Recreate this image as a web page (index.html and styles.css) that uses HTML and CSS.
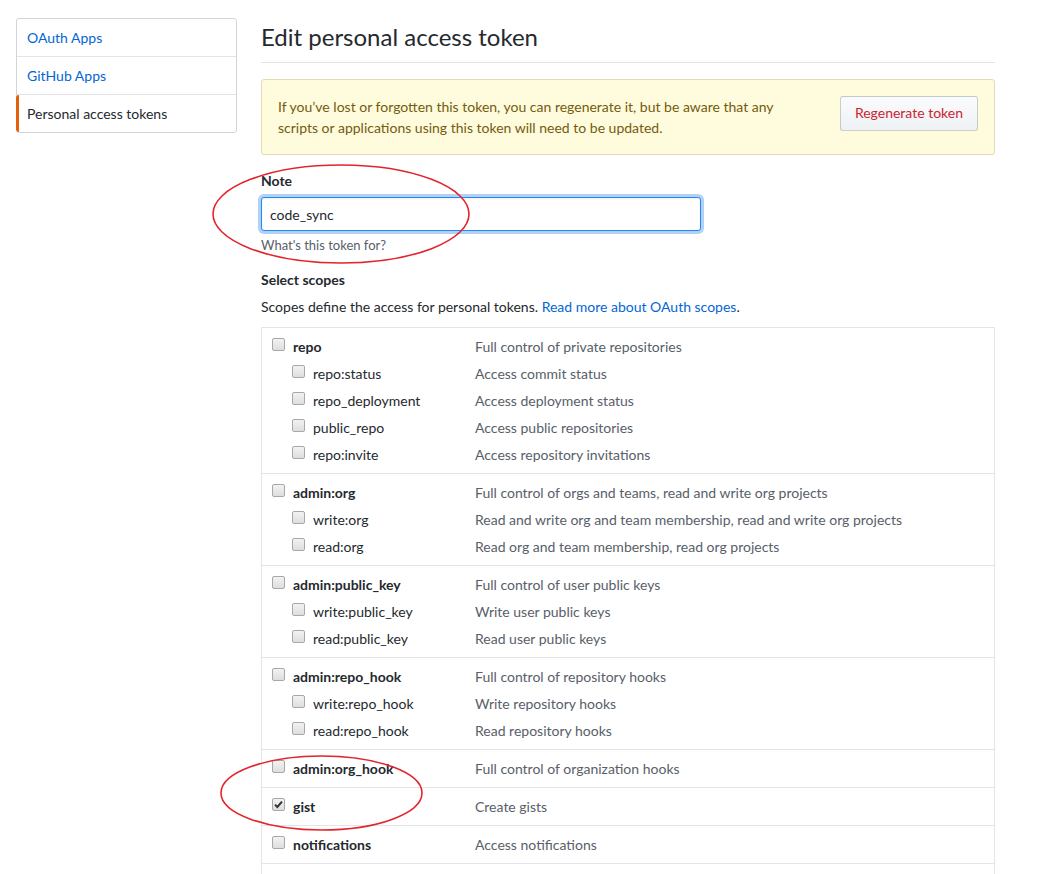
FILE: index.html
```html
<!DOCTYPE html>
<html lang="en">
<head>
<meta charset="utf-8">
<title>Edit personal access token</title>
<link rel="stylesheet" href="styles.css">
</head>
<body>
<div class="page">
  <nav class="menu">
    <a class="menu-item" href="#">OAuth Apps</a>
    <a class="menu-item" href="#">GitHub Apps</a>
    <a class="menu-item selected" href="#">Personal access tokens</a>
  </nav>
  <main class="main">
    <h2 class="subhead">Edit personal access token</h2>
    <div class="flash">
      <p class="flash-text">If you’ve lost or forgotten this token, you can regenerate it, but be aware that any scripts or applications using this token will need to be updated.</p>
      <button class="btn btn-danger" type="button">Regenerate token</button>
    </div>
    <div class="form-group">
      <label class="form-label" for="note">Note</label>
      <input class="form-control" id="note" type="text" value="code_sync">
      <p class="note">What's this token for?</p>
    </div>
    <div class="form-group scopes-head">
      <div class="form-label">Select scopes</div>
      <p class="scopes-intro">Scopes define the access for personal tokens. <a href="#">Read more about OAuth scopes</a>.</p>
    </div>
    <div class="scopes">
      <div class="group">
        <div class="row"><span class="opt"><span class="cb"></span><span class="name">repo</span></span><span class="desc">Full control of private repositories</span></div>
        <div class="row sub"><span class="opt"><span class="cb"></span><span class="name">repo:status</span></span><span class="desc">Access commit status</span></div>
        <div class="row sub"><span class="opt"><span class="cb"></span><span class="name">repo_deployment</span></span><span class="desc">Access deployment status</span></div>
        <div class="row sub"><span class="opt"><span class="cb"></span><span class="name">public_repo</span></span><span class="desc">Access public repositories</span></div>
        <div class="row sub"><span class="opt"><span class="cb"></span><span class="name">repo:invite</span></span><span class="desc">Access repository invitations</span></div>
      </div>
      <div class="group">
        <div class="row"><span class="opt"><span class="cb"></span><span class="name">admin:org</span></span><span class="desc">Full control of orgs and teams, read and write org projects</span></div>
        <div class="row sub"><span class="opt"><span class="cb"></span><span class="name">write:org</span></span><span class="desc">Read and write org and team membership, read and write org projects</span></div>
        <div class="row sub"><span class="opt"><span class="cb"></span><span class="name">read:org</span></span><span class="desc">Read org and team membership, read org projects</span></div>
      </div>
      <div class="group">
        <div class="row"><span class="opt"><span class="cb"></span><span class="name">admin:public_key</span></span><span class="desc">Full control of user public keys</span></div>
        <div class="row sub"><span class="opt"><span class="cb"></span><span class="name">write:public_key</span></span><span class="desc">Write user public keys</span></div>
        <div class="row sub"><span class="opt"><span class="cb"></span><span class="name">read:public_key</span></span><span class="desc">Read user public keys</span></div>
      </div>
      <div class="group">
        <div class="row"><span class="opt"><span class="cb"></span><span class="name">admin:repo_hook</span></span><span class="desc">Full control of repository hooks</span></div>
        <div class="row sub"><span class="opt"><span class="cb"></span><span class="name">write:repo_hook</span></span><span class="desc">Write repository hooks</span></div>
        <div class="row sub"><span class="opt"><span class="cb"></span><span class="name">read:repo_hook</span></span><span class="desc">Read repository hooks</span></div>
      </div>
      <div class="group">
        <div class="row"><span class="opt"><span class="cb"></span><span class="name">admin:org_hook</span></span><span class="desc">Full control of organization hooks</span></div>
      </div>
      <div class="group">
        <div class="row"><span class="opt"><span class="cb checked"><svg viewBox="0 0 11 11" width="11" height="11"><path d="M2 5.6 L4.3 8 L9 2.6" fill="none" stroke="#333" stroke-width="2"/></svg></span><span class="name">gist</span></span><span class="desc">Create gists</span></div>
      </div>
      <div class="group">
        <div class="row"><span class="opt"><span class="cb"></span><span class="name">notifications</span></span><span class="desc">Access notifications</span></div>
      </div>
      <div class="group group-more"></div>
    </div>
  </main>
</div>
<svg class="annotations" width="1046" height="874" viewBox="0 0 1046 874" aria-hidden="true">
  <ellipse cx="341" cy="214" rx="128" ry="49" fill="none" stroke="#e2242c" stroke-width="1.6"/>
  <ellipse cx="321.5" cy="793" rx="100.5" ry="37" fill="none" stroke="#e2242c" stroke-width="1.6"/>
</svg>
</body>
</html>
```
FILE: styles.css
```css
* { box-sizing: border-box; }
html, body { margin: 0; padding: 0; }
body {
  position: relative;
  background: #fff;
  color: #24292e;
  font-family: Lato, "Noto Sans", sans-serif;
  font-size: 14px;
  line-height: 21px;
  overflow: hidden;
  height: 874px;
}
a { color: #0366d6; text-decoration: none; }
p { margin: 0; }

.page {
  display: flex;
  align-items: flex-start;
  gap: 24px;
  padding: 18px 16px 0;
}

.menu {
  flex: 0 0 221px;
  display: flex;
  flex-direction: column;
  border: 1px solid #d1d5da;
  border-radius: 3px;
  background: #fff;
}
.menu-item {
  position: relative;
  display: block;
  padding: 8px 10px;
  border-bottom: 1px solid #e1e4e8;
}
.menu-item:last-child { border-bottom: 0; }
.menu-item.selected { color: #24292e; }
.menu-item.selected::before {
  content: "";
  position: absolute;
  top: 0;
  bottom: 0;
  left: -1px;
  width: 3px;
  background: #e36209;
  border-radius: 3px 0 0 3px;
}

.main { flex: 0 0 734px; }

.subhead {
  margin: 1px 0 16px;
  padding-bottom: 7px;
  border-bottom: 1px solid #e1e4e8;
  font-size: 24px;
  font-weight: 400;
  line-height: 36px;
}

.flash {
  display: flex;
  align-items: flex-start;
  justify-content: space-between;
  gap: 20px;
  padding: 16px;
  background: #fffbdd;
  border: 1px solid #e4dcb0;
  border-radius: 3px;
  color: #735c0f;
}
.flash-text { max-width: 520px; }

.btn {
  flex: 0 0 auto;
  padding: 6px 14px 7px;
  font: inherit;
  font-size: 14px;
  line-height: 20px;
  border: 1px solid rgba(27, 31, 35, 0.2);
  border-radius: 3px;
  background: linear-gradient(#fafbfc, #eff3f6 90%);
  cursor: pointer;
}
.btn-danger { color: #cb2431; }

.form-group { margin-top: 15px; }
.form-label {
  display: block;
  font-weight: 700;
  margin-bottom: 6px;
}
.form-control {
  display: block;
  width: 440px;
  height: 34px;
  padding: 6px 8px;
  font: inherit;
  font-size: 14px;
  color: #24292e;
  border: 1px solid #2188ff;
  border-radius: 3px;
  outline: none;
  box-shadow: inset 0 1px 2px rgba(27, 31, 35, 0.075), 0 0 0 3px rgba(3, 102, 214, 0.3);
}
.note {
  margin-top: 4px;
  font-size: 13px;
  line-height: 20px;
  color: #586069;
}
.scopes-head { margin-top: 14px; }
.scopes-head .form-label { margin-bottom: 6px; }
.scopes-intro { margin-bottom: 10px; }

.scopes {
  border: 1px solid #e1e4e8;
  border-bottom: 0;
}
.group {
  padding: 8px 0;
  border-bottom: 1px solid #e1e4e8;
}
.group-more {
  height: 40px;
  border-bottom: 0;
}
.row {
  display: grid;
  grid-template-columns: 203px 1fr;
  padding-left: 10px;
}
.row + .row { margin-top: 6px; }
.row.sub .opt { padding-left: 20px; }
.opt {
  display: flex;
  align-items: flex-start;
}
.name { font-weight: 700; }
.row.sub .name { font-weight: 400; }
.desc { color: #586069; }

.cb {
  flex: 0 0 13px;
  width: 13px;
  height: 13px;
  margin: 2px 8px 0 0;
  border: 1px solid #a8a8a8;
  border-radius: 2px;
  background: linear-gradient(#f2f2f2, #dedede);
  display: flex;
  align-items: center;
  justify-content: center;
}
.cb svg { display: block; }

.annotations {
  position: absolute;
  top: 0;
  left: 0;
  pointer-events: none;
}
```
